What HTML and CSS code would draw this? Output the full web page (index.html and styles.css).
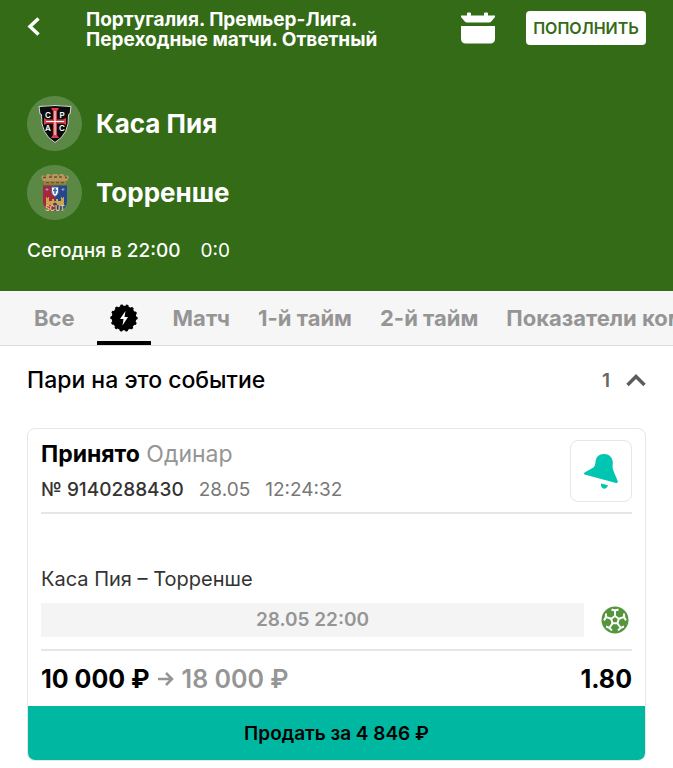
FILE: index.html
```html
<!DOCTYPE html>
<html lang="ru">

<head>
  <meta charset="UTF-8" />
  <meta name="viewport" content="width=device-width, initial-scale=1.0" />
  <title>Каса Пия – Торренше</title>
  <link rel="stylesheet" href="styles.css">
</head>

<body>

  <header class="match-header">
    <div class="top-bar">
      <button class="icon-btn back-btn" aria-label="Назад">
        <svg width="14" height="20" viewBox="0 0 14 20" fill="none" stroke="#fff" stroke-width="3.500">
          <path d="M11.500 1.500 3 9.500l8.500 8" />
        </svg>
      </button>
      <h1>Португалия. Премьер-Лига.<br>Переходные матчи. Ответный</h1>
      <button class="icon-btn calendar-btn" aria-label="Календарь">
        <svg width="36" height="32" viewBox="0 0 36 32" fill="#fff">
          <path d="M1 3.500h6V1.500a1 1 0 0 1 1-1h2a1 1 0 0 1 1 1v2h13v-2a1 1 0 0 1 1-1h2a1 1 0 0 1 1 1v2h7V5l-4 4.700q-.6.800-2 .800H7q-1.400 0-2-.800L1 5z" />
          <path d="M1 14h34v12.500q0 5-5 5H6q-5 0-5-5z" />
        </svg>
      </button>
      <button class="deposit-btn">ПОПОЛНИТЬ</button>
    </div>

    <div class="team">
      <span class="crest">
        <svg width="34" height="40" viewBox="0 0 34 40">
          <path d="M1 2.500Q17 .500 33 2.500L32 10q-1-.5-1.500 1 1 19-13.500 27.500Q2.500 30 3.500 11 3 9.500 2 10z" fill="#0c0c0e" stroke="#d5d9d2" stroke-width="1" />
          <path d="M13 4h8l-2 3v8.500h6l3-1.500v7l-3-1.500h-6V31l2 3h-8l2-3V19.500H9L6 21v-7l3 1.500h6V7z" fill="#dc4048" />
          <path d="M17 7v24M8 17.500h18" stroke="#fff" stroke-width="1" />
          <g class="crest-letters">
            <text x="10" y="13.500">C</text>
            <text x="24" y="13.500">P</text>
            <text x="10" y="27">A</text>
            <text x="24" y="27">C</text>
          </g>
        </svg>
      </span>
      <h2>Каса Пия</h2>
    </div>

    <div class="team">
      <span class="crest">
        <svg width="30" height="40" viewBox="0 0 30 40">
          <path d="M1 4l2-2 2 2 2-3h3l1 2 2-2h4l2 2 1-2h3l2 3 2-2 2 2-2 4H3z" fill="#b9975c" />
          <path d="M4 8h22v3.500H4z" fill="#9d8046" />
          <path d="M3 4.500h3M9 4h3M14 4h3M19 4h3M25 4.500h2M6 9.700h3M11 9.700h3M16 9.700h3M21 9.700h3" stroke="#65522e" stroke-width="1.300" />
          <path d="M3 12.500h12V38q-12-.5-12-10z" fill="#a8263b" />
          <path d="M15 12.500h12V28q0 9.500-12 10z" fill="#24478d" />
          <path d="M11.500 14h7v4q0 4-3.500 5.500-3.500-1.500-3.500-5.500z" fill="#fff" stroke="#49649b" stroke-width="1" />
          <path d="M15 15v6M13 17.500h4" stroke="#3564ad" stroke-width="1.500" />
          <path d="M7 15v3M5.500 16.500h3M23 15v3M21.500 16.500h3" stroke="#969bc4" stroke-width="1" />
          <path d="M6 32V24h1v1h1v-1h1v4h3v-2h2v2h2v-2h2v2h3v-4h1v1h1v-1h1v8z" fill="#cda44f" />
          <path d="M13 32v-1q2-3 4 0v1z" fill="#563b42" />
          <text class="crest-name" x="15" y="37.500">SCUT</text>
        </svg>
      </span>
      <h2>Торренше</h2>
    </div>

    <div class="match-status">
      <span>Сегодня в 22:00</span>
      <span class="score">0:0</span>
    </div>
  </header>

  <nav class="tabs">
    <a href="#all">Все</a>
    <a href="#fast" class="icon-tab active" aria-label="Быстрые">
      <svg width="28" height="28" viewBox="0 0 28 28">
        <circle cx="14" cy="14" r="12.300" />
        <circle cx="14" cy="14" r="12.200" fill="none" stroke="#000" stroke-width="3.200" stroke-linecap="round" stroke-dasharray="0.100 5.375" />
        <path d="M15.500 7 10 15h3.500L12.500 21.500l5.500-8.500h-3.500z" fill="#fff" />
      </svg>
    </a>
    <a href="#match">Матч</a>
    <a href="#half1">1-й тайм</a>
    <a href="#half2">2-й тайм</a>
    <a href="#stats">Показатели команд</a>
  </nav>

  <main class="bets">
    <div class="bets-title">
      <h2>Пари на это событие</h2>
      <button class="icon-btn collapse-btn">
        1
        <svg width="20" height="14" viewBox="0 0 20 14" fill="none" stroke="#5d5d5d" stroke-width="3.500">
          <path d="M1.500 12 10 3.500l8.500 8.500" />
        </svg>
      </button>
    </div>

    <section class="bet-card">
      <div class="bet-body">
        <div class="bet-head">
          <div>
            <p class="bet-state"><strong>Принято</strong> Одинар</p>
            <p class="bet-info">
              <span class="bet-number">№ 9140288430</span>
              <span>28.05</span>
              <span>12:24:32</span>
            </p>
          </div>
          <button class="bell-btn" aria-label="Уведомления">
            <svg width="36" height="38" viewBox="0 0 36 38" fill="#00c5b0">
              <path d="M1.500 22.500q-1.500-1.300.5-2.300l8-4.500q2.200-1.500 2.500-5C12.500 5 16 2 21 2c6 0 9.700 5 8.700 10.500q-.7 4 1 7l4 9.500q.800 2.500-1.700 2z" />
              <path d="M18 31.500l7 1.800q-1.500 4-4.500 3.200-2.800-.8-2.500-5z" />
            </svg>
          </button>
        </div>

        <div class="bet-event">
          <p class="event-name">Каса Пия – Торренше</p>
          <div class="event-row">
            <time class="event-time">28.05 22:00</time>
            <svg width="28" height="28" viewBox="0 0 28 28">
              <circle cx="14" cy="14" r="13.500" fill="#55953d" />
              <g fill="none" stroke="#fff" stroke-width="2">
                <path d="M14 10l3.800 2.800-1.400 4.400h-4.800l-1.400-4.400z" />
                <path d="M14 10V4M17.800 12.800l5.700-1.900M16.400 17.200l3.500 5M11.600 17.200l-3.500 5M10.200 12.800l-5.700-1.900" />
                <path d="M10.500 3.500q3.500 1.500 7 0M22.900 7.500q-.4 3.800 2.100 6.900M23 20.500q-3.800.8-5.900 4M5 20.500q3.800.8 5.900 4M5.100 7.500q.4 3.800-2.100 6.900" />
              </g>
            </svg>
          </div>
        </div>

        <div class="bet-sum">
          <span>10 000 ₽</span>
          <svg width="16" height="16" viewBox="0 0 16 16" fill="none" stroke="#959595" stroke-width="2.500">
            <path d="M0 8h14M8 2l6 6-6 6" />
          </svg>
          <span class="payout">18 000 ₽</span>
          <span class="odds">1.80</span>
        </div>
      </div>
      <button class="sell-btn">Продать за 4 846 ₽</button>
    </section>
  </main>

</body>

</html>
```

FILE: styles.css
```css
:root {
  --green: #336b17;
  --teal: #00b8a2;
  --muted: #959595;
  --line: #e6e6e6;
}

* {
  box-sizing: border-box;
}

body {
  margin: 0;
  font-family: Inter, "Noto Sans", sans-serif;
  color: #000;
  background-color: #fff;
  overflow-x: hidden;
}

h1,
h2,
p {
  margin: 0;
}

button {
  border: none;
  padding: 0;
  font-family: inherit;
  cursor: pointer;
}

svg {
  display: block;
  flex-shrink: 0;
}

.icon-btn {
  display: flex;
  align-items: center;
  background: none;
}

/* header */
.match-header {
  padding: 10px 27px 28px;
  background-color: var(--green);
  color: #fff;
}

.top-bar {
  display: flex;
  align-items: flex-start;
  margin-bottom: 46px;
}

.back-btn {
  width: 59px;
  height: 34px;
}

.top-bar h1 {
  flex: 1;
  font-size: 19px;
  line-height: 20px;
  font-weight: 700;
  white-space: nowrap;
}

.calendar-btn {
  margin: 2px 30px 0 0;
}

.deposit-btn {
  width: 120px;
  height: 34px;
  margin-top: 1px;
  border-radius: 4px;
  background-color: #fff;
  color: var(--green);
  font-size: 16px;
  font-weight: 600;
}

.team {
  display: flex;
  align-items: center;
  gap: 14px;
  margin-bottom: 14px;
}

.team h2 {
  font-size: 26px;
  line-height: 32px;
  font-weight: 700;
}

.crest {
  display: flex;
  align-items: center;
  justify-content: center;
  width: 55px;
  height: 55px;
  border-radius: 50%;
  background-color: #5b8945;
}

.crest-letters {
  fill: #fff;
  font-size: 8px;
  font-weight: 600;
  text-anchor: middle;
}

.crest-name {
  fill: #e5c987;
  font-size: 7px;
  font-weight: 700;
  text-anchor: middle;
}

.match-status {
  display: flex;
  gap: 20px;
  margin-top: 19px;
  font-size: 19px;
  line-height: 24px;
  font-weight: 500;
}

.score {
  font-weight: 400;
}

/* tabs */
.tabs {
  display: flex;
  height: 55px;
  padding-left: 20px;
  background-color: #f6f6f6;
  border-bottom: 1px solid #dcdcdc;
  overflow: hidden;
}

.tabs a {
  flex-shrink: 0;
  padding: 0 14px;
  color: var(--muted);
  font-size: 22px;
  line-height: 54px;
  font-weight: 700;
  text-decoration: none;
  white-space: nowrap;
}

.tabs .icon-tab {
  display: flex;
  align-items: center;
  margin: 0 8px;
  padding: 0 13px;
}

.tabs .active {
  border-bottom: 4px solid #000;
  padding-top: 4px;
}

/* bets */
.bets {
  padding: 0 27px 8px;
}

.bets-title {
  display: flex;
  align-items: center;
  justify-content: space-between;
  height: 68px;
  margin-bottom: 14px;
}

.bets-title h2 {
  font-size: 23px;
  font-weight: 500;
}

.collapse-btn {
  gap: 16px;
  color: #666;
  font-size: 19px;
  font-weight: 600;
}

.bet-card {
  border: 1px solid var(--line);
  border-radius: 8px;
  overflow: hidden;
}

.bet-body {
  padding: 11px 13px 0;
}

.bet-head {
  display: flex;
  justify-content: space-between;
  padding-bottom: 10px;
  border-bottom: 2px solid var(--line);
}

.bet-state {
  font-size: 23px;
  line-height: 28px;
  color: var(--muted);
}

.bet-state strong {
  font-weight: 700;
  color: #000;
}

.bet-info {
  display: flex;
  gap: 15px;
  margin-top: 10px;
  font-size: 19px;
  line-height: 24px;
  color: #777;
}

.bet-number {
  font-weight: 500;
  color: #333;
}

.bell-btn {
  display: flex;
  align-items: center;
  justify-content: center;
  width: 62px;
  height: 62px;
  border: 1px solid var(--line);
  border-radius: 8px;
  background-color: #fff;
}

.bet-event {
  padding: 53px 0 12px;
  border-bottom: 2px solid var(--line);
  font-size: 19px;
  line-height: 24px;
  color: #333;
}

.event-name {
  font-size: 20px;
}

.event-row {
  display: flex;
  align-items: center;
  gap: 17px;
  margin-top: 12px;
  padding-right: 3px;
}

.event-time {
  flex: 1;
  background-color: #f4f4f4;
  color: var(--muted);
  font-weight: 600;
  line-height: 34px;
  text-align: center;
}

.bet-sum {
  display: flex;
  align-items: center;
  gap: 8px;
  height: 55px;
  font-size: 25px;
  font-weight: 700;
}

.payout {
  color: var(--muted);
  font-weight: 600;
}

.odds {
  margin-left: auto;
}

.sell-btn {
  display: block;
  width: 100%;
  height: 54px;
  background-color: var(--teal);
  color: #000;
  font-size: 19px;
  font-weight: 600;
}
```
